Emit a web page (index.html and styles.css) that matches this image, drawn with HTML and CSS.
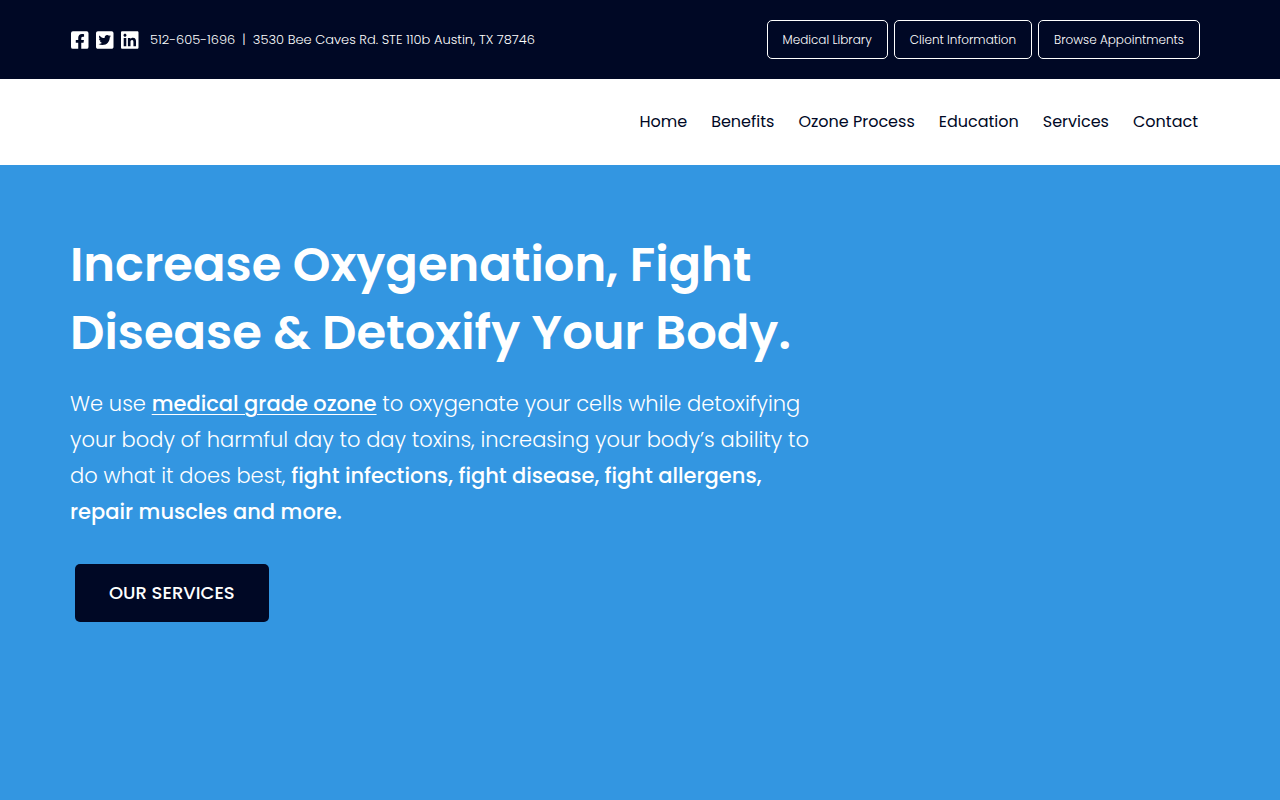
FILE: index.html
```html
<!DOCTYPE html>
<html lang="en">
<head>
    <meta charset="UTF-8">
    <meta name="viewport" content="width=device-width, initial-scale=1.0">
    <title>Increase Oxygenation, Fight Disease &amp; Detoxify Your Body</title>
    <link rel="stylesheet" href="styles.css">
</head>
<body>
    <div class="top-bar">
        <div class="container top-bar-inner">
            <div class="contact-info">
                <div class="social">
                    <a href="#" aria-label="Facebook">
                        <svg viewBox="0 0 448 512"><path d="M400 32H48A48 48 0 0 0 0 80v352a48 48 0 0 0 48 48h137.250V327.690h-63V256h63v-54.640c0-62.150 37-96.480 93.670-96.480 27.140 0 55.520 4.840 55.520 4.840v61h-31.270c-30.810 0-40.420 19.120-40.420 38.730V256h68.780l-11 71.690h-57.780V480H400a48 48 0 0 0 48-48V80a48 48 0 0 0-48-48z"/></svg>
                    </a>
                    <a href="#" aria-label="Twitter">
                        <svg viewBox="0 0 448 512"><path d="M400 32H48C21.500 32 0 53.500 0 80v352c0 26.500 21.500 48 48 48h352c26.500 0 48-21.500 48-48V80c0-26.500-21.500-48-48-48zm-48.900 158.800c.2 2.800.2 5.700.2 8.500 0 86.700-66 186.600-186.600 186.600-37.200 0-71.700-10.800-100.700-29.400 5.300.6 10.400.8 15.800.8 30.700 0 58.900-10.400 81.400-28-28.800-.6-53-19.500-61.300-45.500 10.100 1.500 19.200 1.500 29.600-1.200-30-6.100-52.500-32.500-52.500-64.400v-.8c8.700 4.900 18.900 7.900 29.600 8.300a65.447 65.447 0 0 1-29.200-54.600c0-12.200 3.200-23.400 8.900-33.100 32.300 39.800 80.800 65.800 135.200 68.600-9.300-44.500 24-80.600 64-80.600 18.900 0 35.900 7.900 47.900 20.700 14.800-2.800 29-8.300 41.600-15.800-4.900 15.200-15.200 28-28.800 36.100 13.200-1.400 26-5.100 37.800-10.200-8.900 13.100-20.100 24.700-32.900 34z"/></svg>
                    </a>
                    <a href="#" aria-label="LinkedIn">
                        <svg viewBox="0 0 448 512"><path d="M416 32H31.900C14.300 32 0 46.500 0 64.300v383.400C0 465.500 14.300 480 31.900 480H416c17.600 0 32-14.500 32-32.300V64.300c0-17.800-14.400-32.300-32-32.300zM135.400 416H69V202.200h66.500V416zm-33.200-243c-21.300 0-38.500-17.300-38.500-38.500S80.900 96 102.200 96c21.200 0 38.500 17.300 38.500 38.500 0 21.300-17.200 38.500-38.500 38.500zm282.100 243h-66.400V312c0-24.800-.5-56.700-34.500-56.700-34.600 0-39.900 27-39.900 54.900V416h-66.400V202.200h63.700v29.200h.9c8.900-16.800 30.600-34.500 62.900-34.500 67.200 0 79.700 44.300 79.700 101.900V416z"/></svg>
                    </a>
                </div>
                <p>512-605-1696 &nbsp;|&nbsp; 3530 Bee Caves Rd. STE 110b Austin, TX 78746</p>
            </div>
            <div class="top-links">
                <a href="#">Medical Library</a>
                <a href="#">Client Information</a>
                <a href="#">Browse Appointments</a>
            </div>
        </div>
    </div>

    <nav>
        <ul class="container menu">
            <li><a href="#">Home</a></li>
            <li><a href="#">Benefits</a></li>
            <li><a href="#">Ozone Process</a></li>
            <li><a href="#">Education</a></li>
            <li><a href="#">Services</a></li>
            <li><a href="#">Contact</a></li>
        </ul>
    </nav>

    <section class="hero">
        <div class="container">
            <div class="hero-text">
                <h1>Increase Oxygenation, Fight Disease &amp; Detoxify Your Body.</h1>
                <p>We use <a href="#">medical grade ozone</a> to oxygenate your cells while detoxifying your body of harmful day to day toxins, increasing your body’s ability to do what it does best, <strong>fight infections, fight disease, fight allergens, repair muscles and more.</strong></p>
                <a href="#" class="hero-button">OUR SERVICES</a>
            </div>
        </div>
    </section>
</body>
</html>
```
FILE: styles.css
```css
* {
    box-sizing: border-box;
}
body {
    margin: 0;
    min-height: 100vh;
    display: flex;
    flex-direction: column;
    font-family: Poppins, Inter, sans-serif;
    font-weight: 300;
    color: #fff;
    background: #3396e1;
}
a {
    color: inherit;
    text-decoration: none;
}
.container {
    width: 100%;
    max-width: 1140px;
    margin: 0 auto;
}
.top-bar {
    background: #000825;
    padding: 20px 0;
}
.top-bar-inner {
    display: flex;
    flex-wrap: wrap;
    justify-content: space-between;
    align-items: center;
    gap: 10px;
    padding-right: 10px;
}
.contact-info {
    display: flex;
    align-items: center;
    gap: 10px;
    font-size: 13px;
}
.contact-info p {
    margin: 0;
}
.social {
    display: flex;
    gap: 5px;
}
.social a {
    display: flex;
    justify-content: center;
    width: 20px;
}
.social svg {
    height: 20px;
    fill: #fff;
}
.top-links {
    display: flex;
    gap: 6px;
    font-size: 12px;
    line-height: 17px;
}
.top-links a {
    padding: 10px 15px;
    border: 1px solid #fff;
    border-radius: 5px;
}
nav {
    background: #fff;
    color: #000825;
    padding: 32px 0 33px;
}
.menu {
    display: flex;
    flex-wrap: wrap;
    justify-content: flex-end;
    gap: 0 24px;
    padding: 0 12px 0 0;
    list-style: none;
    font-size: 16px;
    font-weight: 400;
    line-height: 21px;
}
.hero {
    flex: 1;
    padding: 66px 0;
}
.hero-text {
    max-width: 750px;
}
h1 {
    margin: 0 0 19px;
    font-size: 48px;
    font-weight: 600;
    line-height: 68px;
}
.hero-text p {
    margin: 0 0 34px;
    font-size: 21px;
    line-height: 36px;
}
.hero-text p a {
    font-weight: 500;
    text-decoration: underline;
    text-decoration-thickness: 1px;
    text-underline-offset: 3px;
}
strong {
    font-weight: 500;
}
.hero-button {
    display: inline-block;
    margin-left: 5px;
    padding: 18px 34px;
    border-radius: 5px;
    background: #000825;
    font-size: 18px;
    font-weight: 500;
    line-height: 22px;
}
```
